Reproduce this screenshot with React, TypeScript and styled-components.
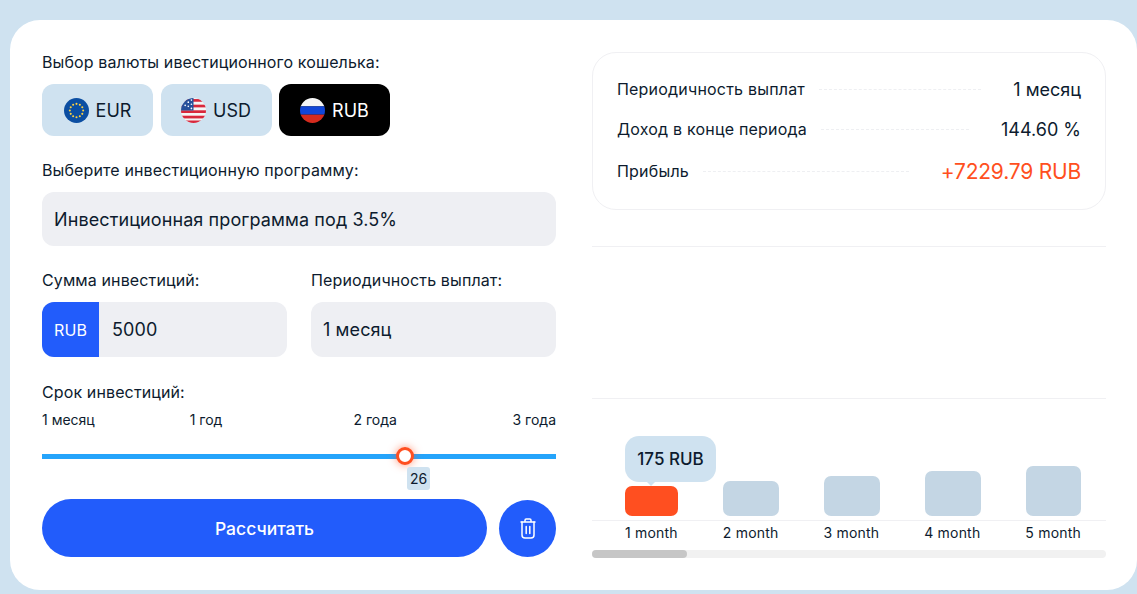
import * as React from 'react';
import styled, { createGlobalStyle } from 'styled-components'

const Global = createGlobalStyle`
  html, body {
    margin: 0;
    padding: 0;
    background: #cfe2f0;
    overflow: hidden;
  }
  * { box-sizing: border-box; }
  body {
    font-family: Inter, "Noto Sans", sans-serif;
    color: #0d1b2e;
  }
`

const Page = styled.div`
  width: 1137px;
  height: 594px;
  padding: 20px 0 4px 10px;
  overflow: hidden;
`

const Card = styled.div`
  width: 1127px;
  height: 570px;
  background: #fff;
  border-radius: 30px;
  padding: 32px 31px 0 32px;
  display: grid;
  grid-template-columns: 514px 514px;
  column-gap: 36px;
`

const Left = styled.div`
  display: flex;
  flex-direction: column;
`

const Right = styled.div`
  display: flex;
  flex-direction: column;
`

const Label = styled.div`
  font-size: 16px;
  line-height: 20px;
  letter-spacing: 0.12px;
`

const Currencies = styled.div`
  display: flex;
  gap: 7.5px;
  margin-top: 12px;
`

const Currency = styled.button<{ $active?: boolean }>`
  width: 111px;
  height: 52px;
  border: none;
  border-radius: 12px;
  background: ${props => props.$active ? '#000' : '#cfe2f0'};
  color: ${props => props.$active ? '#fff' : '#0d1b2e'};
  font: inherit;
  font-size: 18px;
  display: flex;
  align-items: center;
  justify-content: center;
  gap: 7px;
  padding: 0;
`

const Field = styled.div`
  height: 54px;
  border-radius: 12px;
  background: #eeeff3;
  display: flex;
  align-items: center;
  padding: 0 12px;
  font-size: 18px;
  letter-spacing: 0.1px;
`

const ProgramLabel = styled(Label)`
  margin-top: 24px;
  margin-bottom: 12px;
`

const TwoCols = styled.div`
  display: grid;
  grid-template-columns: 245px 245px;
  column-gap: 24px;
  margin-top: 24px;
`

const FieldLabel = styled(Label)`
  margin-bottom: 12px;
`

const AmountField = styled(Field)`
  padding: 0;
  height: 55px;
  overflow: hidden;
`

const PeriodField = styled(Field)`
  height: 55px;
`

const Prefix = styled.div`
  width: 57px;
  height: 100%;
  background: #225cfb;
  color: #fff;
  font-size: 16px;
  display: flex;
  align-items: center;
  justify-content: center;
  margin-right: 13px;
`

const TermLabel = styled(Label)`
  margin-top: 25px;
`

const Marks = styled.div`
  display: flex;
  margin-top: 8px;
  font-size: 14px;
  line-height: 20px;
`

const Mark = styled.span<{ $gap?: number }>`
  margin-left: ${props => props.$gap ?? 0}px;

  &:last-child {
    margin-left: auto;
  }
`

const SliderWrap = styled.div`
  position: relative;
  height: 5px;
  margin-top: 24px;
  background: #25a4fb;
`

const Thumb = styled.div`
  position: absolute;
  left: 354px;
  top: -7px;
  width: 18px;
  height: 18px;
  border-radius: 50%;
  background: #fff;
  border: 3px solid #ff4f20;
  box-shadow: 0 0 8px rgba(255, 79, 32, 0.6);
`

const ThumbValue = styled.div`
  position: absolute;
  left: 365px;
  top: 13px;
  width: 23px;
  height: 23px;
  border-radius: 3px;
  background: #cfe2f0;
  font-size: 14px;
  display: flex;
  align-items: center;
  justify-content: center;
`

const Actions = styled.div`
  display: flex;
  justify-content: space-between;
  align-items: center;
  margin-top: 40px;
`

const Submit = styled.button`
  width: 445px;
  height: 58px;
  border: none;
  border-radius: 29px;
  background: #225cfb;
  color: #fff;
  font: inherit;
  font-size: 17.5px;
  font-weight: 500;
`

const TrashButton = styled.button`
  width: 57px;
  height: 57px;
  border: none;
  border-radius: 50%;
  background: #225cfb;
  color: #fff;
  display: flex;
  align-items: center;
  justify-content: center;
  padding: 0;
`

const Summary = styled.div`
  height: 158px;
  border: 1px solid #f0f0f3;
  border-radius: 24px;
  padding: 16px 24px 0;
  display: flex;
  flex-direction: column;
`

const SummaryRow = styled.div<{ $height: number }>`
  height: ${props => props.$height}px;
  display: flex;
  align-items: center;
  font-size: 16px;
  letter-spacing: 0.2px;
`

const Dots = styled.div`
  flex: 1;
  border-top: 1px dashed #eeeff2;
  margin: 0 32px 0 14px;
`

const Value = styled.div<{ $accent?: boolean }>`
  font-size: ${props => props.$accent ? 21 : 18}px;
  letter-spacing: ${props => props.$accent ? -0.2 : 0}px;
  color: ${props => props.$accent ? '#ff4f20' : '#0d1b2e'};
`

const Divider = styled.div<{ $gap: number }>`
  height: 1px;
  background: #f0f0f3;
  margin-top: ${props => props.$gap}px;
`

const Chart = styled.div`
  position: relative;
  display: flex;
  align-items: flex-end;
  justify-content: space-between;
  height: 68px;
  margin-top: 54px;
  padding: 0 25px 0 33px;
  border-bottom: 1px solid #f0f0f3;
`

const BarColumn = styled.div`
  padding-bottom: 4px;
`

const Bar = styled.div<{ $active?: boolean; $width: number; $height: number }>`
  width: ${props => props.$width}px;
  height: ${props => props.$height}px;
  border-radius: 7px;
  background: ${props => props.$active ? '#ff4f20' : '#c4d6e4'};
`

const Bubble = styled.div`
  position: absolute;
  left: 33px;
  top: -17px;
  width: 91px;
  height: 46px;
  border-radius: 14px;
  background: #cfe2f0;
  font-size: 17px;
  font-weight: 500;
  display: flex;
  align-items: center;
  justify-content: center;

  &::after {
    content: "";
    position: absolute;
    left: 22px;
    bottom: -4px;
    border-left: 4px solid transparent;
    border-right: 4px solid transparent;
    border-top: 4px solid #cfe2f0;
  }
`

const Months = styled.div`
  display: flex;
  justify-content: space-between;
  padding: 0 25px 0 33px;
  margin-top: 3px;
  font-size: 14px;
  line-height: 18px;
  letter-spacing: 0.2px;
`

const Scrollbar = styled.div`
  height: 8px;
  margin-top: 8px;
  border-radius: 4px;
  background: #f1f1f1;
`

const ScrollThumb = styled.div`
  width: 95px;
  height: 100%;
  border-radius: 4px;
  background: #c6c6c6;
`

function EuFlag() {
  const stars = Array.from({ length: 12 }, (_, i) => {
    const a = (i * Math.PI) / 6
    return <circle key={i} cx={12 + 6.4 * Math.sin(a)} cy={12 - 6.4 * Math.cos(a)} r="1" fill="#ffd23f" />
  })
  return (
    <svg width="25" height="25" viewBox="0 0 24 24">
      <circle cx="12" cy="12" r="12" fill="#0b4ea2" />
      {stars}
    </svg>
  )
}

function UsFlag() {
  return (
    <svg width="25" height="25" viewBox="0 0 24 24">
      <defs>
        <clipPath id="us-clip"><circle cx="12" cy="12" r="12" /></clipPath>
      </defs>
      <g clipPath="url(#us-clip)">
        <rect width="24" height="24" fill="#f5f5f5" />
        <rect y="1" width="24" height="2.6" fill="#d8283c" />
        <rect y="6.4" width="24" height="2.6" fill="#d8283c" />
        <rect y="11.8" width="24" height="2.6" fill="#d8283c" />
        <rect y="17" width="24" height="2.6" fill="#d8283c" />
        <rect y="21.6" width="24" height="2.6" fill="#d8283c" />
        <rect width="12" height="12" fill="#27509b" />
        <circle cx="4" cy="7" r="0.8" fill="#fff" />
        <circle cx="7" cy="4" r="0.8" fill="#fff" />
        <circle cx="10" cy="2" r="0.8" fill="#fff" />
        <circle cx="7" cy="8" r="0.8" fill="#fff" />
        <circle cx="10" cy="6" r="0.8" fill="#fff" />
        <circle cx="10" cy="10" r="0.8" fill="#fff" />
      </g>
    </svg>
  )
}

function RuFlag() {
  return (
    <svg width="25" height="25" viewBox="0 0 24 24">
      <defs>
        <clipPath id="ru-clip"><circle cx="12" cy="12" r="12" /></clipPath>
      </defs>
      <g clipPath="url(#ru-clip)">
        <rect width="24" height="8" fill="#f5f5f5" />
        <rect y="8" width="24" height="8" fill="#1146d8" />
        <rect y="16" width="24" height="8" fill="#d52b1e" />
      </g>
    </svg>
  )
}

function TrashIcon() {
  return (
    <svg width="16" height="21" viewBox="0 0 16 21" fill="none" stroke="currentColor" strokeWidth="1.5" strokeLinecap="round" strokeLinejoin="round">
      <path d="M5 3.5V2.2Q5 1 6.2 1H9.8Q11 1 11 2.2V3.5" />
      <path d="M1 4H15" />
      <path d="M2 4V17Q2 20 5 20H11Q14 20 14 17V4" />
      <path d="M6.2 8.5V15.5M9.8 8.5V15.5" />
    </svg>
  )
}

const bars = [
  { width: 53, height: 30, active: true },
  { width: 56, height: 35 },
  { width: 56, height: 40 },
  { width: 56, height: 45 },
  { width: 55, height: 50 },
]

export default function App() {
  return (
    <Page>
      <Global />
      <Card>
        <Left>
          <Label>Выбор валюты ивестиционного кошелька:</Label>
          <Currencies>
            <Currency><EuFlag />EUR</Currency>
            <Currency><UsFlag />USD</Currency>
            <Currency $active><RuFlag />RUB</Currency>
          </Currencies>
          <ProgramLabel>Выберите инвестиционную программу:</ProgramLabel>
          <Field>Инвестиционная программа под 3.5%</Field>
          <TwoCols>
            <div>
              <FieldLabel>Сумма инвестиций:</FieldLabel>
              <AmountField><Prefix>RUB</Prefix>5000</AmountField>
            </div>
            <div>
              <FieldLabel>Периодичность выплат:</FieldLabel>
              <PeriodField>1 месяц</PeriodField>
            </div>
          </TwoCols>
          <TermLabel>Срок инвестиций:</TermLabel>
          <Marks>
            <Mark>1 месяц</Mark>
            <Mark $gap={95}>1 год</Mark>
            <Mark $gap={131}>2 года</Mark>
            <Mark>3 года</Mark>
          </Marks>
          <SliderWrap>
            <Thumb />
            <ThumbValue>26</ThumbValue>
          </SliderWrap>
          <Actions>
            <Submit>Рассчитать</Submit>
            <TrashButton><TrashIcon /></TrashButton>
          </Actions>
        </Left>
        <Right>
          <Summary>
            <SummaryRow $height={40}>
              Периодичность выплат<Dots /><Value>1 месяц</Value>
            </SummaryRow>
            <SummaryRow $height={40}>
              Доход в конце периода<Dots /><Value>144.60 %</Value>
            </SummaryRow>
            <SummaryRow $height={44}>
              Прибыль<Dots /><Value $accent>+7229.79 RUB</Value>
            </SummaryRow>
          </Summary>
          <Divider $gap={36} />
          <Divider $gap={151} />
          <Chart>
            <Bubble>175 RUB</Bubble>
            {bars.map((bar, index) => (
              <BarColumn key={index}>
                <Bar $active={bar.active} $width={bar.width} $height={bar.height} />
              </BarColumn>
            ))}
          </Chart>
          <Months>
            <span>1 month</span>
            <span>2 month</span>
            <span>3 month</span>
            <span>4 month</span>
            <span>5 month</span>
          </Months>
          <Scrollbar><ScrollThumb /></Scrollbar>
        </Right>
      </Card>
    </Page>
  );
}
